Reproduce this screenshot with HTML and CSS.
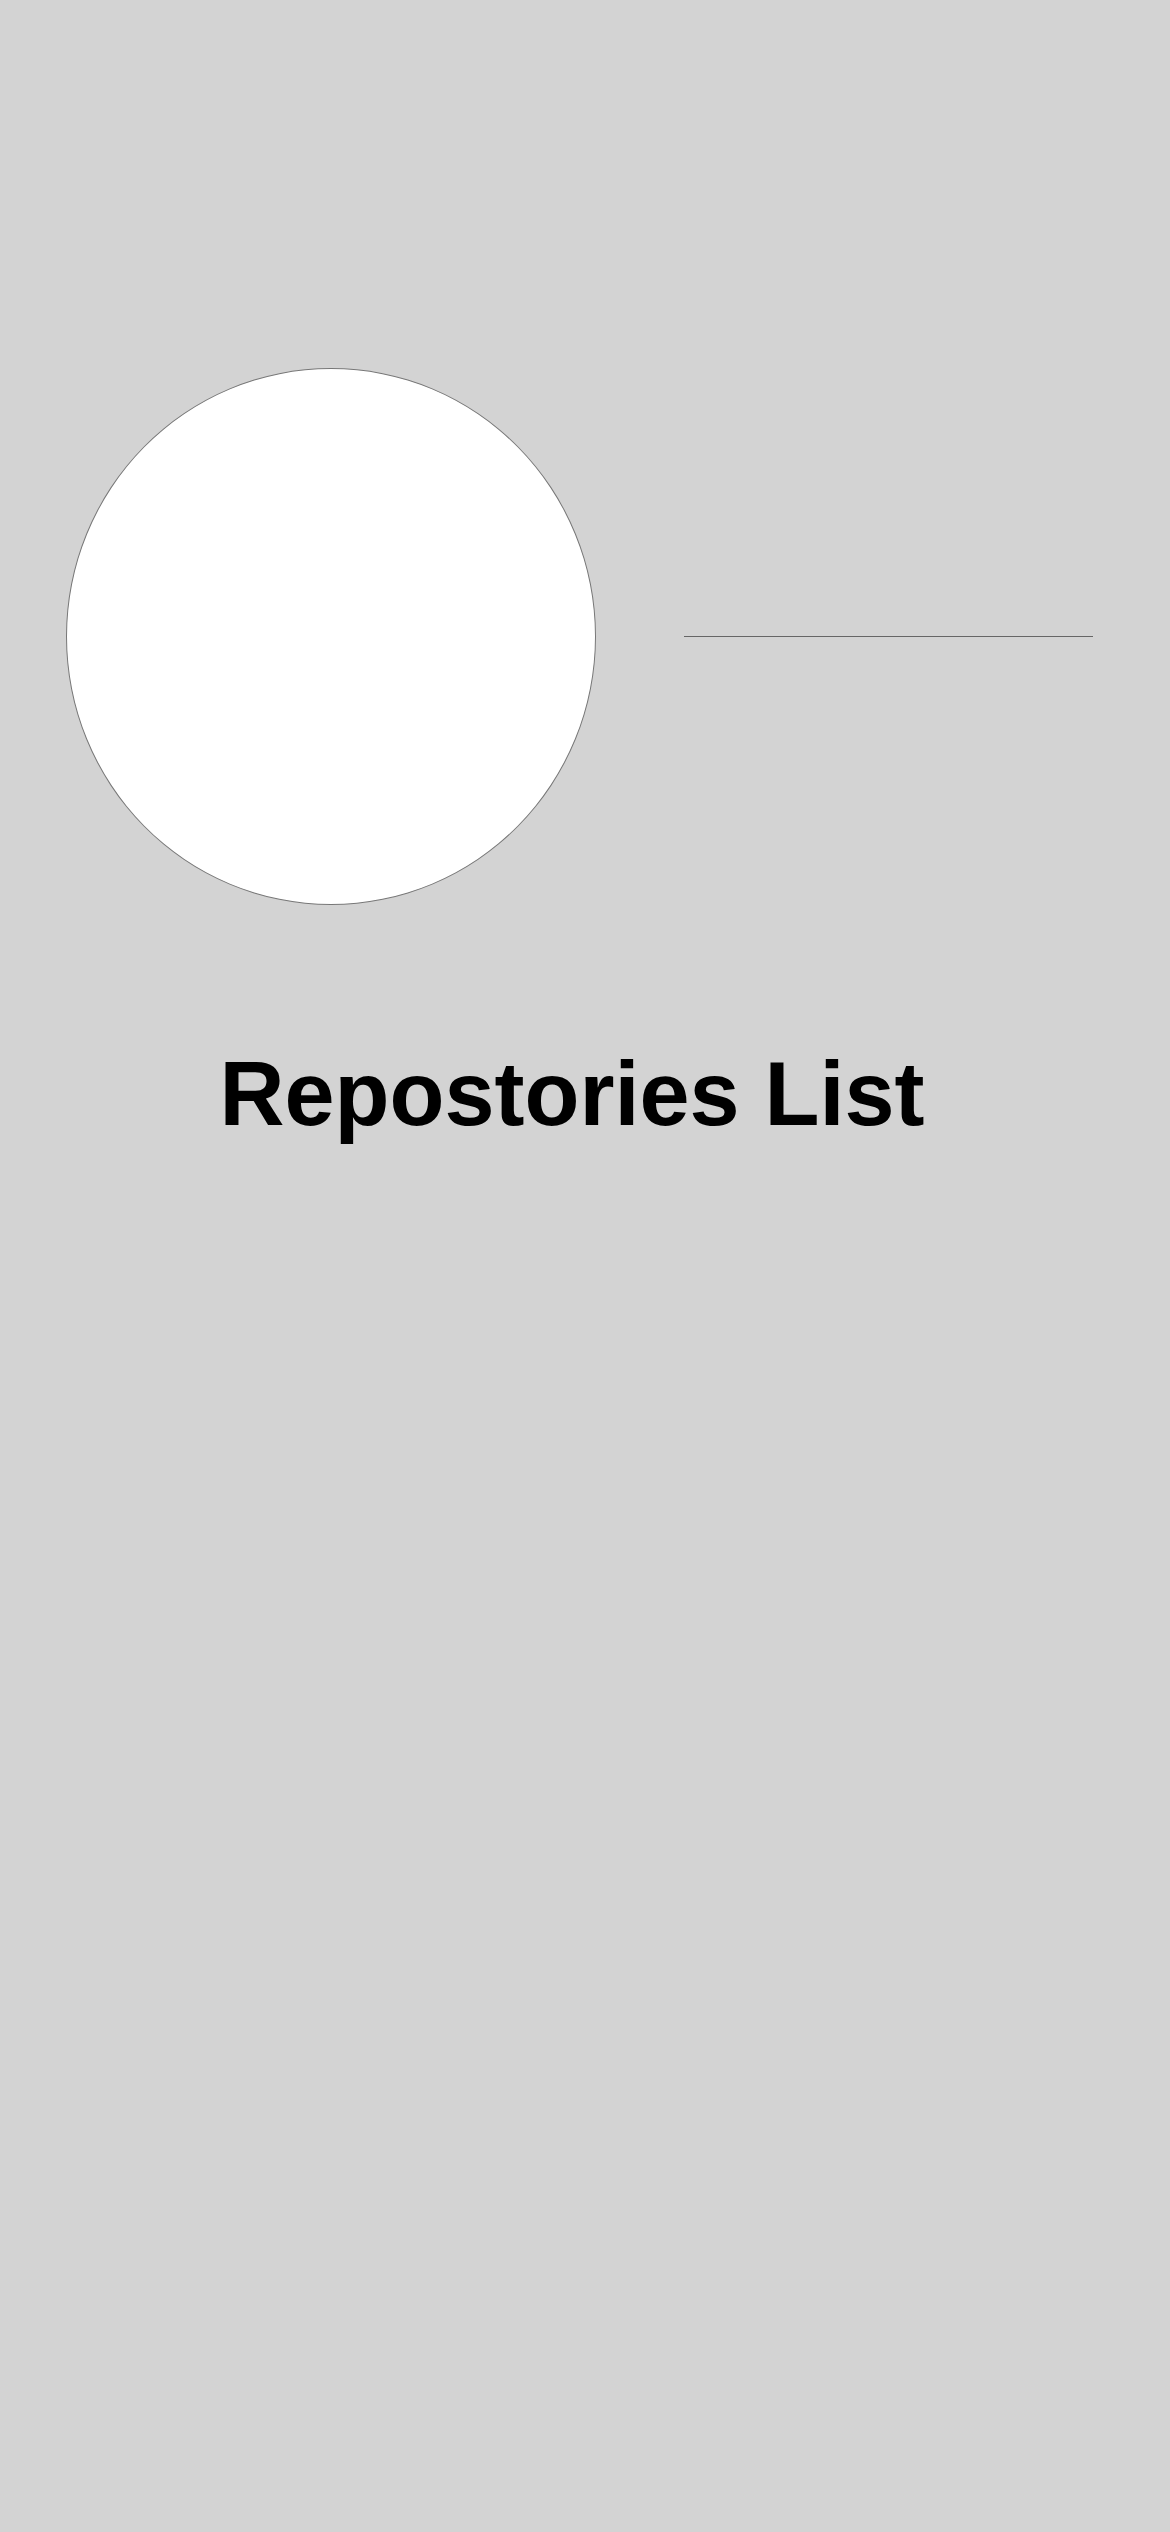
FILE: index.html
```html
<!DOCTYPE html>
<html>
<head>
<meta charset="utf-8">
<link rel="stylesheet" href="styles.css">
</head>
<body>
<div class="screen">
  <div class="header">
    <div class="avatar"></div>
    <div class="rule"></div>
  </div>
  <h1 class="title">Repostories List</h1>
</div>
</body>
</html>
```
FILE: styles.css
```css
html, body {
  margin: 0;
  padding: 0;
  background: #d3d3d3;
}
.screen {
  width: 1170px;
  min-height: 2532px;
  font-family: "Liberation Sans", Arial, sans-serif;
}
.header {
  display: flex;
  align-items: center;
  padding: 368px 0 0 66px;
  gap: 88px;
}
.avatar {
  width: 528px;
  height: 535px;
  border: 1px solid #777;
  border-radius: 50%;
  background: #fff;
  flex: none;
}
.rule {
  width: 409px;
  height: 0;
  border-top: 1px solid #666;
}
.title {
  margin: 144px 0 0 0;
  padding-right: 26px;
  font-size: 90px;
  line-height: 1;
  font-weight: bold;
  text-align: center;
  color: #000;
}
```
